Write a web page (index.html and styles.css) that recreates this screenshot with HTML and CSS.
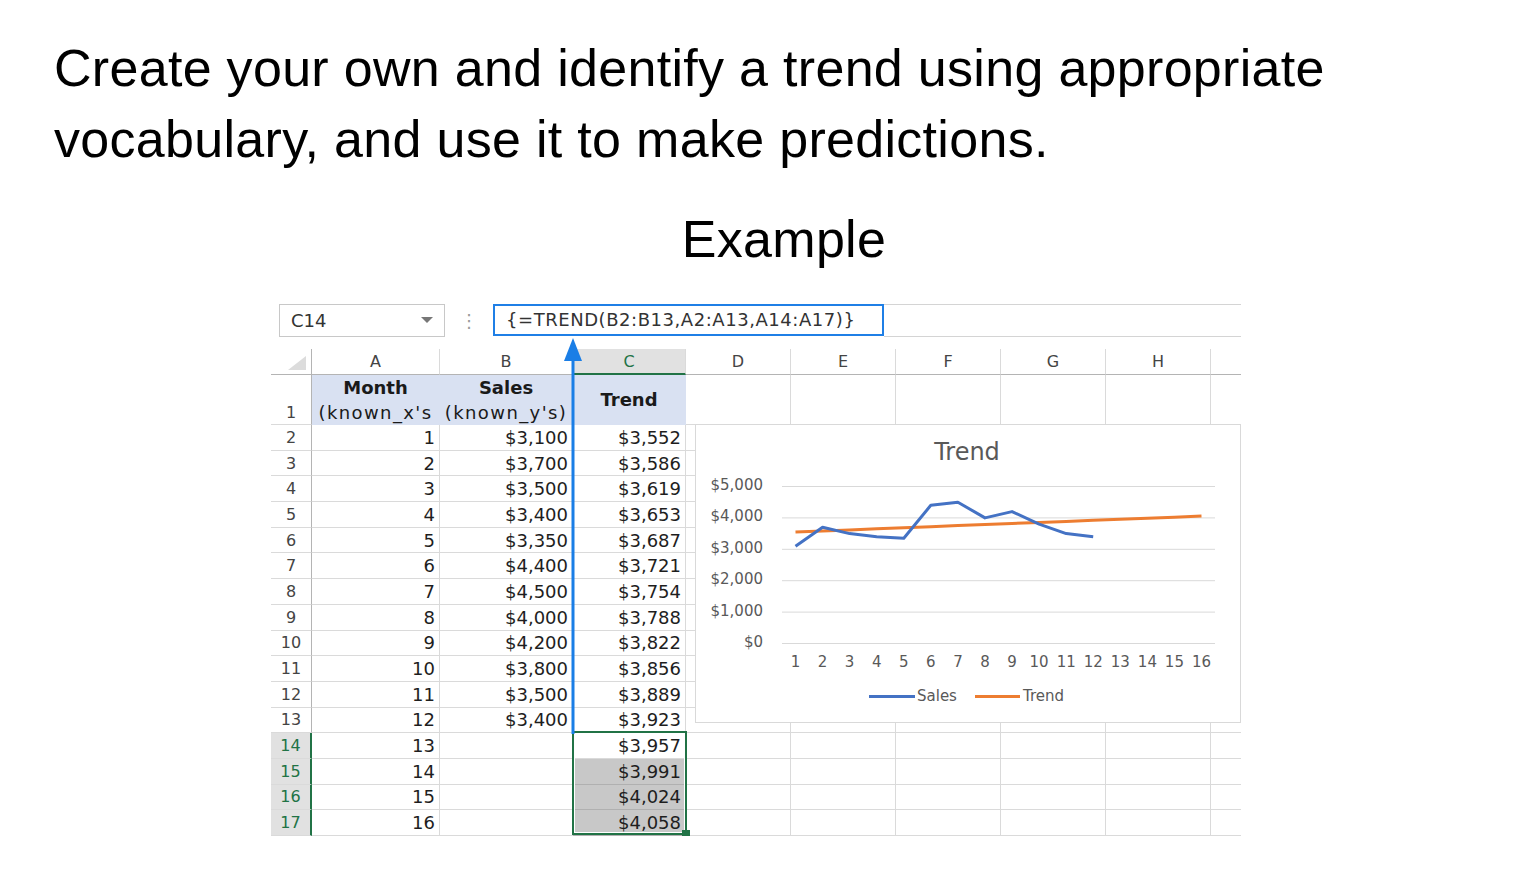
FILE: index.html
```html
<!DOCTYPE html>
<html lang="en">
<head>
  <meta charset="UTF-8" />
  <meta name="viewport" content="width=device-width, initial-scale=1.0"/>
  <title>Trend Example</title>
  <link rel="stylesheet" href="styles.css">
</head>
<body>

  <h1 class="prompt">Create your own and identify a trend using appropriate vocabulary, and use it to make predictions.</h1>
  <h2 class="example-title">Example</h2>

  <div class="sheet">
    <div class="formula-bar">
      <div class="name-box"><span>C14</span><span class="caret"></span></div>
      <div class="dots">&#8942;</div>
      <div class="formula">{=TREND(B2:B13,A2:A13,A14:A17)}</div>
      <div class="formula-rest"></div>
    </div>

    <div class="grid-wrap">
      <div class="grid">
        <!-- column headers -->
        <div class="corner"><span class="corner-tri"></span></div>
        <div class="ch">A</div><div class="ch">B</div><div class="ch ch-active">C</div>
        <div class="ch">D</div><div class="ch">E</div><div class="ch">F</div><div class="ch">G</div><div class="ch">H</div><div class="ch last"></div>

        <!-- row 1 -->
        <div class="rh rh-bottom">1</div>
        <div class="c head"><b>Month</b><span>(known_x's</span></div>
        <div class="c head"><b>Sales</b><span>(known_y's)</span></div>
        <div class="c head head-single"><b>Trend</b></div>
        <div class="c"></div><div class="c"></div><div class="c"></div><div class="c"></div><div class="c"></div><div class="c last"></div>

        <div class="rh">2</div><div class="c num">1</div><div class="c num">$3,100</div><div class="c num">$3,552</div>
        <div class="c"></div><div class="c"></div><div class="c"></div><div class="c"></div><div class="c"></div><div class="c last"></div>
        <div class="rh">3</div><div class="c num">2</div><div class="c num">$3,700</div><div class="c num">$3,586</div>
        <div class="c"></div><div class="c"></div><div class="c"></div><div class="c"></div><div class="c"></div><div class="c last"></div>
        <div class="rh">4</div><div class="c num">3</div><div class="c num">$3,500</div><div class="c num">$3,619</div>
        <div class="c"></div><div class="c"></div><div class="c"></div><div class="c"></div><div class="c"></div><div class="c last"></div>
        <div class="rh">5</div><div class="c num">4</div><div class="c num">$3,400</div><div class="c num">$3,653</div>
        <div class="c"></div><div class="c"></div><div class="c"></div><div class="c"></div><div class="c"></div><div class="c last"></div>
        <div class="rh">6</div><div class="c num">5</div><div class="c num">$3,350</div><div class="c num">$3,687</div>
        <div class="c"></div><div class="c"></div><div class="c"></div><div class="c"></div><div class="c"></div><div class="c last"></div>
        <div class="rh">7</div><div class="c num">6</div><div class="c num">$4,400</div><div class="c num">$3,721</div>
        <div class="c"></div><div class="c"></div><div class="c"></div><div class="c"></div><div class="c"></div><div class="c last"></div>
        <div class="rh">8</div><div class="c num">7</div><div class="c num">$4,500</div><div class="c num">$3,754</div>
        <div class="c"></div><div class="c"></div><div class="c"></div><div class="c"></div><div class="c"></div><div class="c last"></div>
        <div class="rh">9</div><div class="c num">8</div><div class="c num">$4,000</div><div class="c num">$3,788</div>
        <div class="c"></div><div class="c"></div><div class="c"></div><div class="c"></div><div class="c"></div><div class="c last"></div>
        <div class="rh">10</div><div class="c num">9</div><div class="c num">$4,200</div><div class="c num">$3,822</div>
        <div class="c"></div><div class="c"></div><div class="c"></div><div class="c"></div><div class="c"></div><div class="c last"></div>
        <div class="rh">11</div><div class="c num">10</div><div class="c num">$3,800</div><div class="c num">$3,856</div>
        <div class="c"></div><div class="c"></div><div class="c"></div><div class="c"></div><div class="c"></div><div class="c last"></div>
        <div class="rh">12</div><div class="c num">11</div><div class="c num">$3,500</div><div class="c num">$3,889</div>
        <div class="c"></div><div class="c"></div><div class="c"></div><div class="c"></div><div class="c"></div><div class="c last"></div>
        <div class="rh">13</div><div class="c num">12</div><div class="c num">$3,400</div><div class="c num">$3,923</div>
        <div class="c"></div><div class="c"></div><div class="c"></div><div class="c"></div><div class="c"></div><div class="c last"></div>

        <div class="rh rh-active">14</div><div class="c num">13</div><div class="c"></div><div class="c num">$3,957</div>
        <div class="c"></div><div class="c"></div><div class="c"></div><div class="c"></div><div class="c"></div><div class="c last"></div>
        <div class="rh rh-active">15</div><div class="c num">14</div><div class="c"></div><div class="c num picked">$3,991</div>
        <div class="c"></div><div class="c"></div><div class="c"></div><div class="c"></div><div class="c"></div><div class="c last"></div>
        <div class="rh rh-active">16</div><div class="c num">15</div><div class="c"></div><div class="c num picked">$4,024</div>
        <div class="c"></div><div class="c"></div><div class="c"></div><div class="c"></div><div class="c"></div><div class="c last"></div>
        <div class="rh rh-active">17</div><div class="c num">16</div><div class="c"></div><div class="c num picked">$4,058</div>
        <div class="c"></div><div class="c"></div><div class="c"></div><div class="c"></div><div class="c"></div><div class="c last"></div>
      </div>

      <!-- selection of C14:C17 -->
      <div class="selection"><span class="fill-handle"></span></div>

      <!-- arrow from C column up to the formula -->
      <svg class="arrow" width="20" height="396" viewBox="0 0 20 396">
        <polygon points="10,0 1,23 19,23" fill="#1a7ee6"/>
        <line x1="10" y1="18" x2="10" y2="396" stroke="#1a7ee6" stroke-width="3"/>
      </svg>

      <!-- chart -->
      <div class="chart">
        <svg width="546" height="299" viewBox="0 0 546 299">
          <text class="chart-title" x="272" y="36" text-anchor="middle">Trend</text>

          <g class="gridlines">
            <line x1="87" y1="62.5" x2="520" y2="62.5"/>
            <line x1="87" y1="93.9" x2="520" y2="93.9"/>
            <line x1="87" y1="125.3" x2="520" y2="125.3"/>
            <line x1="87" y1="156.7" x2="520" y2="156.7"/>
            <line x1="87" y1="188.1" x2="520" y2="188.1"/>
            <line x1="87" y1="219.5" x2="520" y2="219.5"/>
          </g>

          <g class="axis-y" text-anchor="end">
            <text x="68" y="66">$5,000</text>
            <text x="68" y="97">$4,000</text>
            <text x="68" y="129">$3,000</text>
            <text x="68" y="160">$2,000</text>
            <text x="68" y="192">$1,000</text>
            <text x="68" y="223">$0</text>
          </g>

          <g class="axis-x" text-anchor="middle">
            <text x="100.5" y="243">1</text>
            <text x="127.6" y="243">2</text>
            <text x="154.6" y="243">3</text>
            <text x="181.7" y="243">4</text>
            <text x="208.8" y="243">5</text>
            <text x="235.8" y="243">6</text>
            <text x="262.9" y="243">7</text>
            <text x="290" y="243">8</text>
            <text x="317" y="243">9</text>
            <text x="344.1" y="243">10</text>
            <text x="371.2" y="243">11</text>
            <text x="398.2" y="243">12</text>
            <text x="425.3" y="243">13</text>
            <text x="452.4" y="243">14</text>
            <text x="479.4" y="243">15</text>
            <text x="506.5" y="243">16</text>
          </g>

          <polyline class="line-trend" points="100.5,108 127.6,106.9 154.6,105.9 181.7,104.8 208.8,103.7 235.8,102.7 262.9,101.6 290,100.6 317,99.5 344.1,98.4 371.2,97.4 398.2,96.3 425.3,95.3 452.4,94.2 479.4,93.2 506.5,92.1"/>
          <polyline class="line-sales" points="100.5,122.2 127.6,103.3 154.6,109.6 181.7,112.7 208.8,114.3 235.8,81.3 262.9,78.2 290,93.9 317,87.6 344.1,100.2 371.2,109.6 398.2,112.7"/>

          <g class="legend">
            <line x1="174" y1="272.5" x2="220" y2="272.5" stroke="#4472c4"/>
            <text x="222" y="277">Sales</text>
            <line x1="280" y1="272.5" x2="325" y2="272.5" stroke="#ed7d31"/>
            <text x="328" y="277">Trend</text>
          </g>
        </svg>
      </div>
    </div>
  </div>

</body>
</html>
```

FILE: styles.css
```css
body {
  margin: 0;
  background-color: #fff;
  color: #000;
  font-family: "Liberation Sans", Arial, sans-serif;
}

.prompt {
  margin: 0;
  padding: 33px 150px 0 54px;
  font-size: 52px;
  line-height: 71px;
  letter-spacing: 0.3px;
  font-weight: normal;
}

.example-title {
  margin: 34px 0 0;
  padding-left: 51px;
  font-size: 52px;
  line-height: 60px;
  letter-spacing: 0.3px;
  font-weight: normal;
  text-align: center;
}

/* spreadsheet picture */

.sheet {
  width: 970px;
  margin: 33px 0 0 271px;
  font-family: "DejaVu Sans", Verdana, sans-serif;
  font-size: 18px;
  color: #1e1e1e;
}

.formula-bar {
  display: flex;
  align-items: center;
  height: 36px;
}

.name-box {
  box-sizing: border-box;
  display: flex;
  align-items: center;
  justify-content: space-between;
  width: 166px;
  height: 33px;
  margin-left: 8px;
  padding: 0 11px 0 11px;
  border: 1px solid #c8c8c8;
  color: #333;
}

.caret {
  width: 0;
  height: 0;
  border-left: 6px solid transparent;
  border-right: 6px solid transparent;
  border-top: 6px solid #777;
}

.dots {
  width: 48px;
  text-align: center;
  color: #9a9a9a;
  font-size: 18px;
}

.formula {
  box-sizing: border-box;
  width: 391px;
  height: 32px;
  padding-left: 11px;
  border: 2px solid #1f7fe6;
  line-height: 28px;
  letter-spacing: 0.55px;
  color: #333;
  white-space: nowrap;
}

.formula-rest {
  flex: 1;
  height: 33px;
  box-sizing: border-box;
  border-top: 1px solid #d4d4d4;
  border-bottom: 1px solid #d4d4d4;
}

.grid-wrap {
  position: relative;
  margin-top: 11px;
}

.grid {
  display: grid;
  grid-template-columns: 41px 128px 133px 113px 105px 105px 105px 105px 105px 30px;
  grid-template-rows: 26px 50px repeat(16, 25.7px);
}

.grid > div {
  box-sizing: border-box;
  border-right: 1px solid #dadada;
  border-bottom: 1px solid #dadada;
}

.grid > .last {
  border-right: none;
}

.corner {
  display: flex;
  align-items: flex-end;
  justify-content: flex-end;
  padding: 0 5px 4px 0;
  border-bottom-color: #b4b4b4 !important;
  border-right-color: #b4b4b4 !important;
}

.corner-tri {
  width: 0;
  height: 0;
  border-left: 18px solid transparent;
  border-bottom: 14px solid #dcdcdc;
}

.ch {
  display: flex;
  align-items: center;
  justify-content: center;
  font-size: 16px;
  color: #444;
  border-bottom-color: #b4b4b4 !important;
}

.ch-active {
  background-color: #e1e1e1;
  color: #217346;
  border-bottom: 2px solid #217346 !important;
}

.rh {
  display: flex;
  align-items: center;
  justify-content: center;
  font-size: 16px;
  color: #444;
  border-right-color: #b4b4b4 !important;
}

.rh-bottom {
  align-items: flex-end;
  padding-bottom: 2px;
}

.rh-active {
  background-color: #e1e1e1;
  color: #217346;
  border-right: 2px solid #217346 !important;
}

.c.num {
  display: flex;
  align-items: center;
  justify-content: flex-end;
  padding-right: 4px;
}

.c.head {
  display: flex;
  flex-direction: column;
  align-items: center;
  justify-content: center;
  background-color: #d9e1f2;
  border-right-color: #d9e1f2;
  border-bottom-color: #d9e1f2;
  line-height: 25px;
  color: #1a1a1a;
  white-space: nowrap;
}

.c.head span {
  letter-spacing: 1.4px;
}

.c.picked {
  background-color: #c8c8c8;
  border-bottom-color: #b0b0b0;
}

.selection {
  position: absolute;
  left: 301px;
  top: 382px;
  width: 115px;
  height: 104px;
  box-sizing: border-box;
  border: 2px solid #217346;
  box-shadow: inset 0 0 0 1px #fff;
}

.fill-handle {
  position: absolute;
  display: block;
  right: -5px;
  bottom: -5px;
  width: 8px;
  height: 8px;
  background-color: #217346;
}

.arrow {
  position: absolute;
  left: 292px;
  top: -11px;
}

.chart {
  position: absolute;
  left: 424px;
  top: 75px;
  width: 546px;
  height: 299px;
  box-sizing: border-box;
  background-color: #fff;
  border: 1px solid #d9d9d9;
}

.chart svg {
  display: block;
  margin: -1px 0 0 -1px;
  font-family: "DejaVu Sans", Verdana, sans-serif;
}

.chart-title {
  font-size: 24px;
  fill: #595959;
}

.gridlines line {
  stroke: #d9d9d9;
  stroke-width: 1;
}

.axis-y text,
.axis-x text,
.legend text {
  font-size: 15px;
  fill: #595959;
}

.legend line {
  stroke-width: 3;
}

.line-sales,
.line-trend {
  fill: none;
  stroke-width: 3;
  stroke-linejoin: round;
}

.line-sales {
  stroke: #4472c4;
}

.line-trend {
  stroke: #ed7d31;
}
```
